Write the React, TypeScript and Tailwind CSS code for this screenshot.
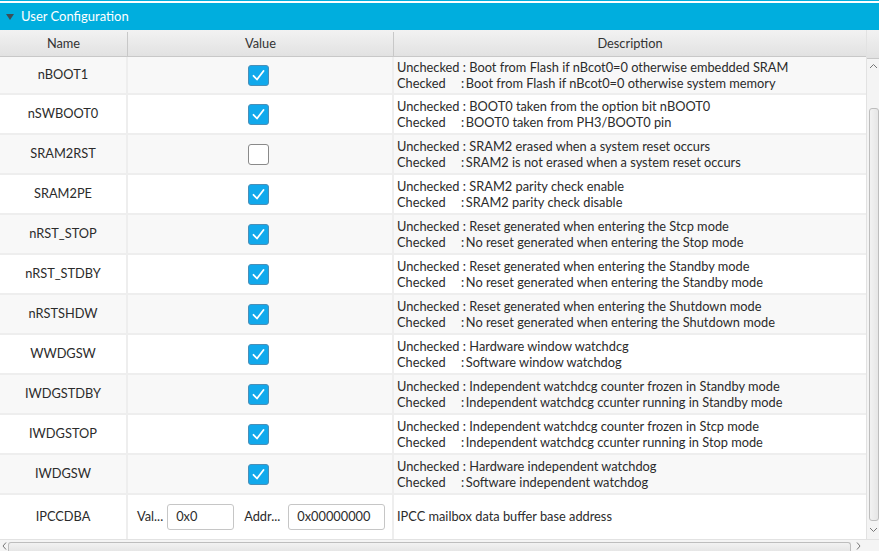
import React from 'react';

interface OptionRow {
  name: string;
  checked: boolean;
  unchecked: string;
  checkedText: string;
}

const rows: OptionRow[] = [
  { name: 'nBOOT1', checked: true, unchecked: 'Boot from Flash if nBcot0=0 otherwise embedded SRAM', checkedText: 'Boot from Flash if nBcot0=0 otherwise system memory' },
  { name: 'nSWBOOT0', checked: true, unchecked: 'BOOT0 taken from the option bit nBOOT0', checkedText: 'BOOT0 taken from PH3/BOOT0 pin' },
  { name: 'SRAM2RST', checked: false, unchecked: 'SRAM2 erased when a system reset occurs', checkedText: 'SRAM2 is not erased when a system reset occurs' },
  { name: 'SRAM2PE', checked: true, unchecked: 'SRAM2 parity check enable', checkedText: 'SRAM2 parity check disable' },
  { name: 'nRST_STOP', checked: true, unchecked: 'Reset generated when entering the Stcp mode', checkedText: 'No reset generated when entering the Stop mode' },
  { name: 'nRST_STDBY', checked: true, unchecked: 'Reset generated when entering the Standby mode', checkedText: 'No reset generated when entering the Standby mode' },
  { name: 'nRSTSHDW', checked: true, unchecked: 'Reset generated when entering the Shutdown mode', checkedText: 'No reset generated when entering the Shutdown mode' },
  { name: 'WWDGSW', checked: true, unchecked: 'Hardware window watchdcg', checkedText: 'Software window watchdog' },
  { name: 'IWDGSTDBY', checked: true, unchecked: 'Independent watchdcg counter frozen in Standby mode', checkedText: 'Independent watchdcg ccunter running in Standby mode' },
  { name: 'IWDGSTOP', checked: true, unchecked: 'Independent watchdcg counter frozen in Stcp mode', checkedText: 'Independent watchdcg ccunter running in Stop mode' },
  { name: 'IWDGSW', checked: true, unchecked: 'Hardware independent watchdog', checkedText: 'Software independent watchdog' },
];

const Checkbox: React.FC<{ checked: boolean }> = ({ checked }) =>
  checked ? (
    <div className="w-[21px] h-[21px] rounded-[3px] bg-[#11a9ec] border border-[#4a8fb8] flex items-center justify-center">
      <svg width="15" height="15" viewBox="0 0 15 15" fill="none">
        <path d="M2.5 7.8 L6 11.5 L12.5 3" stroke="white" strokeWidth="1.8" strokeLinecap="round" strokeLinejoin="round" />
      </svg>
    </div>
  ) : (
    <div className="w-[21px] h-[21px] rounded-[3px] bg-white border border-[#8a8a8a]" />
  );

const Description: React.FC<{ a: string; b: string }> = ({ a, b }) => (
  <div className="leading-[16px]">
    <div>Unchecked&nbsp;:&nbsp;{a}</div>
    <div className="flex">
      <span className="w-[64px]">Checked</span>
      <span>:&thinsp;{b}</span>
    </div>
  </div>
);

export default function App() {
  return (
    <div className="w-[879px] h-[551px] bg-white overflow-hidden flex flex-col text-[12.8px] text-[#2b2b2b]" style={{ fontFamily: 'Lato, "Open Sans", sans-serif' }}>
      <div className="h-px bg-[#00aede]" />
      <div className="h-[2px] bg-white" />
      <div className="h-[27px] bg-[#00aede] flex items-center pl-[5px] gap-[6px] text-white">
        <svg width="10" height="8" viewBox="0 0 10 8"><path d="M1 1 L9 1 L5 7 Z" fill="#3d4f57" /></svg>
        <span className="text-[13px]">User Configuration</span>
      </div>
      <div className="flex flex-1 min-h-0">
        <div className="flex-1 flex flex-col min-w-0">
          <div className="h-[29px] flex bg-gradient-to-b from-[#f2f2f2] to-[#e2e2e2] border-b border-[#c8c8c8] text-[#333] pt-[2px]">
            <div className="w-[128px] border-r border-[#c8c8c8] flex items-center justify-center">Name</div>
            <div className="w-[266px] border-r border-[#c8c8c8] flex items-center justify-center">Value</div>
            <div className="flex-1 flex items-center justify-center">Description</div>
          </div>
          <div className="flex-1 flex flex-col">
            {rows.map((r, i) => (
              <div key={r.name} className={`flex border-b-2 border-[#eeeeee] ${i === 0 ? 'h-[38px]' : 'h-[40px]'} ${i % 2 === 0 ? 'bg-[#f8f8f8]' : 'bg-white'}`}>
                <div className="w-[128px] border-r-2 border-[#eeeeee] flex items-center justify-center">{r.name}</div>
                <div className="w-[266px] border-r-2 border-[#eeeeee] flex items-center justify-center pr-[4px]">
                  <Checkbox checked={r.checked} />
                </div>
                <div className="flex-1 flex items-center pl-[3px] whitespace-nowrap">
                  <Description a={r.unchecked} b={r.checkedText} />
                </div>
              </div>
            ))}
            <div className="flex h-[44px] bg-white">
              <div className="w-[128px] border-r-2 border-[#eeeeee] flex items-center justify-center">IPCCDBA</div>
              <div className="w-[266px] border-r-2 border-[#eeeeee] flex items-center pl-[9px]">
                <span>Val...</span>
                <div className="ml-[4px] w-[67px] h-[26px] border border-[#c6c6c6] rounded-[3px] flex items-center pl-[8px] bg-white">0x0</div>
                <span className="ml-[10px]">Addr...</span>
                <div className="ml-[8px] w-[97px] h-[26px] border border-[#c6c6c6] rounded-[3px] flex items-center pl-[8px] bg-white">0x00000000</div>
              </div>
              <div className="flex-1 flex items-center pl-[3px]">IPCC mailbox data buffer base address</div>
            </div>
          </div>
        </div>
        <div className="w-[13px] flex flex-col bg-[#f4f4f4] border-l border-[#e2e2e2]">
          <div className="h-[29px] bg-gradient-to-b from-[#f2f2f2] to-[#e2e2e2] border-b border-[#c8c8c8]" />
          <div className="h-[14px] flex items-center justify-center">
            <svg width="9" height="6" viewBox="0 0 9 6"><path d="M1 5 L4.5 1.5 L8 5" stroke="#777" strokeWidth="1" fill="none" /></svg>
          </div>
          <div className="h-[35px]" />
          <div className="flex-1 ml-[2px] rounded-[3px] border border-[#bdbdbd] bg-gradient-to-r from-[#f2f2f2] to-[#e6e6e6]" />
          <div className="h-[18px] flex items-center justify-center">
            <svg width="9" height="6" viewBox="0 0 9 6"><path d="M1 1 L4.5 4.5 L8 1" stroke="#777" strokeWidth="1" fill="none" /></svg>
          </div>
        </div>
      </div>
      <div className="h-[12px] flex bg-[#f4f4f4] border-t border-[#e2e2e2]">
        <div className="w-[8px] flex items-center justify-center">
          <svg width="5" height="8" viewBox="0 0 5 8"><path d="M4 0.5 L1 4 L4 7.5" stroke="#777" strokeWidth="1" fill="none" /></svg>
        </div>
        <div className="w-[843px] mt-[2px] rounded-t-[3px] border border-b-0 border-[#bdbdbd] bg-gradient-to-b from-[#f2f2f2] to-[#e6e6e6]" />
        <div className="w-[15px] flex items-center justify-center">
          <svg width="5" height="8" viewBox="0 0 5 8"><path d="M1 0.5 L4 4 L1 7.5" stroke="#777" strokeWidth="1" fill="none" /></svg>
        </div>
      </div>
    </div>
  );
}
